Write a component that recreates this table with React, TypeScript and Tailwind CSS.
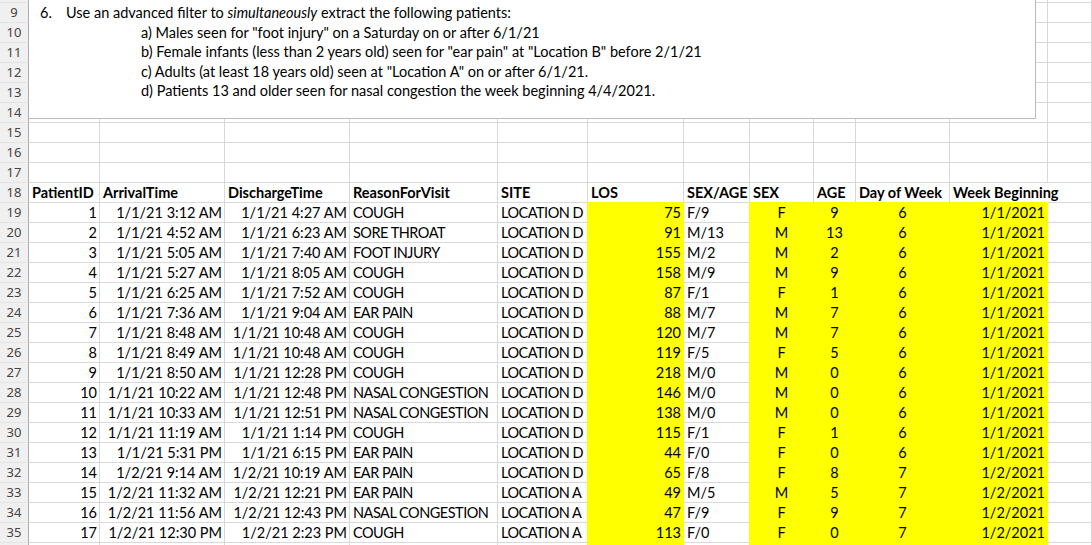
import clsx from "clsx";

type Row = [number, string, string, string, string, number, string, string, number, number, string];

const rows: Row[] = [
  [1, "1/1/21 3:12 AM", "1/1/21 4:27 AM", "COUGH", "LOCATION D", 75, "F/9", "F", 9, 6, "1/1/2021"],
  [2, "1/1/21 4:52 AM", "1/1/21 6:23 AM", "SORE THROAT", "LOCATION D", 91, "M/13", "M", 13, 6, "1/1/2021"],
  [3, "1/1/21 5:05 AM", "1/1/21 7:40 AM", "FOOT INJURY", "LOCATION D", 155, "M/2", "M", 2, 6, "1/1/2021"],
  [4, "1/1/21 5:27 AM", "1/1/21 8:05 AM", "COUGH", "LOCATION D", 158, "M/9", "M", 9, 6, "1/1/2021"],
  [5, "1/1/21 6:25 AM", "1/1/21 7:52 AM", "COUGH", "LOCATION D", 87, "F/1", "F", 1, 6, "1/1/2021"],
  [6, "1/1/21 7:36 AM", "1/1/21 9:04 AM", "EAR PAIN", "LOCATION D", 88, "M/7", "M", 7, 6, "1/1/2021"],
  [7, "1/1/21 8:48 AM", "1/1/21 10:48 AM", "COUGH", "LOCATION D", 120, "M/7", "M", 7, 6, "1/1/2021"],
  [8, "1/1/21 8:49 AM", "1/1/21 10:48 AM", "COUGH", "LOCATION D", 119, "F/5", "F", 5, 6, "1/1/2021"],
  [9, "1/1/21 8:50 AM", "1/1/21 12:28 PM", "COUGH", "LOCATION D", 218, "M/0", "M", 0, 6, "1/1/2021"],
  [10, "1/1/21 10:22 AM", "1/1/21 12:48 PM", "NASAL CONGESTION", "LOCATION D", 146, "M/0", "M", 0, 6, "1/1/2021"],
  [11, "1/1/21 10:33 AM", "1/1/21 12:51 PM", "NASAL CONGESTION", "LOCATION D", 138, "M/0", "M", 0, 6, "1/1/2021"],
  [12, "1/1/21 11:19 AM", "1/1/21 1:14 PM", "COUGH", "LOCATION D", 115, "F/1", "F", 1, 6, "1/1/2021"],
  [13, "1/1/21 5:31 PM", "1/1/21 6:15 PM", "EAR PAIN", "LOCATION D", 44, "F/0", "F", 0, 6, "1/1/2021"],
  [14, "1/2/21 9:14 AM", "1/2/21 10:19 AM", "EAR PAIN", "LOCATION D", 65, "F/8", "F", 8, 7, "1/2/2021"],
  [15, "1/2/21 11:32 AM", "1/2/21 12:21 PM", "EAR PAIN", "LOCATION A", 49, "M/5", "M", 5, 7, "1/2/2021"],
  [16, "1/2/21 11:56 AM", "1/2/21 12:43 PM", "NASAL CONGESTION", "LOCATION A", 47, "F/9", "F", 9, 7, "1/2/2021"],
  [17, "1/2/21 12:30 PM", "1/2/21 2:23 PM", "COUGH", "LOCATION A", 113, "F/0", "F", 0, 7, "1/2/2021"],
];

const headers = ["PatientID", "ArrivalTime", "DischargeTime", "ReasonForVisit", "SITE", "LOS", "SEX/AGE", "SEX", "AGE", "Day of Week", "Week Beginning"];

// column alignment + yellow fill per data column
const align = ["right", "right", "right", "left", "left", "right", "left", "center", "center", "center", "right"];
const filled = [false, false, false, false, false, true, false, true, true, true, true];

const grid =
  "grid grid-cols-[29px_71px_125px_125px_148px_90px_96px_66px_64px_42px_94px_98px_1fr] h-[20px]";

const RowHead = ({ n }: { n?: number }) => (
  <div className="h-full bg-[#f0f0f0] border-r border-b border-r-[#ababab] border-b-[#e3e3e3] text-center text-[13px] leading-[19px] text-[#444] font-['Noto_Sans',sans-serif]">
    {n}
  </div>
);

const Cell = ({
  children,
  a = "left",
  fill = false,
  className,
}: {
  children?: React.ReactNode;
  a?: string;
  fill?: boolean;
  className?: string;
}) => (
  <div
    className={clsx(
      "h-full border-r border-b px-[2px] whitespace-nowrap leading-[19px]",
      fill ? "bg-[#ffff00] border-[#ffff00] shadow-[-1px_-1px_0_0_#ffff00]" : "border-[#d9d9d9]",
      a === "right" && "text-right",
      a === "center" && "text-center",
      className
    )}
  >
    {children}
  </div>
);

const EmptyRow = ({ n }: { n?: number }) => (
  <div className={grid}>
    <RowHead n={n} />
    {Array.from({ length: 12 }).map((_, i) => (
      <Cell key={i} />
    ))}
  </div>
);

export default function App() {
  return (
    <div className="w-[1092px] h-[545px] overflow-hidden bg-white text-black text-[14.5px] font-[Lato,sans-serif]">
      <div className="relative -mt-[17px]">
        <EmptyRow />
        {[9, 10, 11, 12, 13, 14, 15, 16, 17].map((n) => (
          <EmptyRow key={n} n={n} />
        ))}

        {/* header row */}
        <div className={grid}>
          <RowHead n={18} />
          {headers.map((h, i) => (
            <Cell key={h} className={clsx("font-bold pl-[3px]", i === 10 && "border-r-transparent overflow-visible")}>
              {h}
            </Cell>
          ))}
          <Cell />
        </div>

        {rows.map((r, ri) => (
          <div key={ri} className={grid}>
            <RowHead n={19 + ri} />
            {r.map((v, i) => (
              <Cell
                key={i}
                a={align[i]}
                fill={filled[i]}
                className={clsx(align[i] === "left" && "pl-[3px]", (i === 3 || i === 4) && "tracking-[-0.5px]")}
              >
                {v}
              </Cell>
            ))}
            <Cell />
          </div>
        ))}

        {/* row 36, only its top edge is in view */}
        <div className={grid}>
          <RowHead />
          {filled.map((f, i) => (
            <Cell key={i} fill={f} />
          ))}
          <Cell />
        </div>

        {/* floating text box over rows 9-14 */}
        <div className="absolute left-[29px] top-[17px] w-[1007px] h-[119px] bg-white border-r border-b border-[#bcbcbc] pt-[3px] leading-[19.6px]">
          <div className="flex pl-[11px]">
            <span className="w-[26px]">6.</span>
            <span>
              Use an advanced filter to <i>simultaneously</i> extract the following patients:
            </span>
          </div>
          <div className="pl-[112px]">
            <p>a) Males seen for "foot injury" on a Saturday on or after 6/1/21</p>
            <p>b) Female infants (less than 2 years old) seen for "ear pain" at "Location B" before 2/1/21</p>
            <p>c) Adults (at least 18 years old) seen at "Location A" on or after 6/1/21.</p>
            <p>d) Patients 13 and older seen for nasal congestion the week beginning 4/4/2021.</p>
          </div>
        </div>
      </div>
    </div>
  );
}
